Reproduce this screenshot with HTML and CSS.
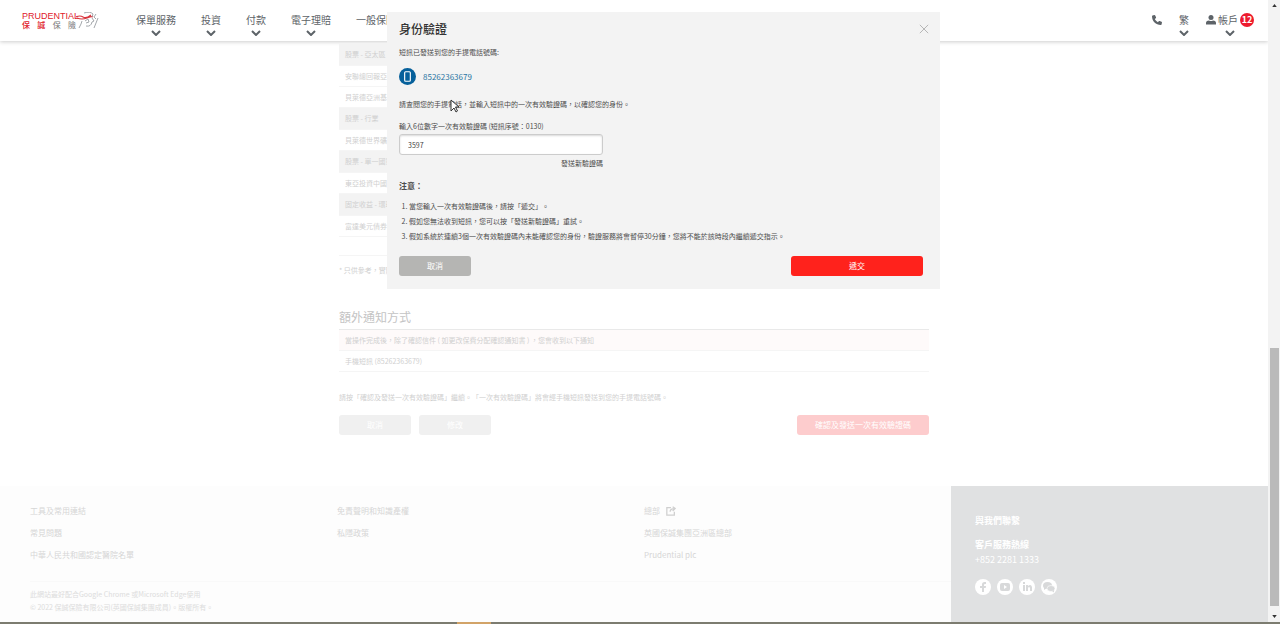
FILE: index.html
```html
<!DOCTYPE html>
<html lang="zh-HK">
<head>
  <meta charset="UTF-8">
  <meta name="viewport" content="width=device-width, initial-scale=1.0">
  <title>保誠保險 - 身份驗證</title>
  <link rel="stylesheet" href="styles.css">
</head>
<body>
  <div class="window">
    <div class="page">
      <header class="site-header">
        <a class="logo" href="#" aria-label="保誠保險">
          <span class="logo-text">
            <span class="logo-en">PRUDENTIAL</span>
            <span class="logo-zh"><b>保</b><b>誠</b><i>保</i><i>險</i></span>
          </span>
          <svg class="logo-face" viewBox="0 0 24 18" fill="none">
            <path d="M0 5q4-2 7 0t8-2M1 6q5 2 10 0t6-1" stroke="#d8343c" stroke-width="1.2"/>
            <path d="M8 1q6-2 9 1l-1 3M6 9l-1 3-2 4M9 9l3-2 1 3-3 1M10 14q5 1 6-4l2-1-2-3M20 2l-2 3 2 2M22 6l-2 5-2 5" stroke="#9a9ea3" stroke-width=".9"/>
          </svg>
        </a>
        <nav class="main-nav">
          <a href="#">保單服務<svg class="chev" viewBox="0 0 10 6"><path d="M1 1l4 4 4-4"/></svg></a>
          <a href="#">投資<svg class="chev" viewBox="0 0 10 6"><path d="M1 1l4 4 4-4"/></svg></a>
          <a href="#">付款<svg class="chev" viewBox="0 0 10 6"><path d="M1 1l4 4 4-4"/></svg></a>
          <a href="#">電子理賠<svg class="chev" viewBox="0 0 10 6"><path d="M1 1l4 4 4-4"/></svg></a>
          <a href="#">一般保險</a>
        </nav>
        <div class="user-nav">
          <a href="#" aria-label="電話"><svg class="phone" viewBox="0 0 512 512"><path d="M165 25c-8-19-28-29-48-23L29 26C12 31 0 46 0 64c0 247 201 448 448 448 18 0 33-12 38-29l24-88c6-20-4-40-23-48l-96-40c-16-7-35-2-46 12l-41 49C234 334 178 278 144 208l49-41c14-11 19-30 12-46z"/></svg></a>
          <a href="#">繁<svg class="chev" viewBox="0 0 10 6"><path d="M1 1l4 4 4-4"/></svg></a>
          <a href="#">
            <span class="account"><svg class="user" viewBox="0 0 20 20"><circle cx="10" cy="5" r="5"/><path d="M0 19v-3q0-5 6-5q4 2 8 0q6 0 6 5v3z"/></svg>帳戶<span class="count">12</span></span>
            <svg class="chev" viewBox="0 0 10 6"><path d="M1 1l4 4 4-4"/></svg>
          </a>
        </div>
      </header>

      <main class="content">
        <table class="funds">
          <tr class="group"><th>股票 - 亞太區</th></tr>
          <tr><td>安聯總回報亞洲</td></tr>
          <tr><td>貝萊德亞洲基金</td></tr>
          <tr class="group"><th>股票 - 行業</th></tr>
          <tr><td>貝萊德世界礦業</td></tr>
          <tr class="group"><th>股票 - 單一國家</th></tr>
          <tr><td>東亞投資中國基金</td></tr>
          <tr class="group"><th>固定收益 - 環球</th></tr>
          <tr><td>富達美元債券基金</td></tr>
        </table>
        <p class="footnote">* 只供參考，實際</p>

        <h2>額外通知方式</h2>
        <table class="notify">
          <tr class="intro"><th>當操作完成後，除了確認信件 ( 如更改保費分配確認通知書 ) ，您會收到以下通知</th></tr>
          <tr><td>手機短訊 (85262363679)</td></tr>
        </table>

        <p class="hint">請按「確認及發送一次有效驗證碼」繼續。「一次有效驗證碼」將會經手機短訊發送到您的手提電話號碼。</p>
        <div class="actions">
          <button class="btn">取消</button>
          <button class="btn">修改</button>
          <button class="btn btn-wide">確認及發送一次有效驗證碼</button>
        </div>
      </main>

      <footer class="site-footer">
        <div class="footer-main">
          <div class="footer-links">
            <div>
              <a href="#">工具及常用連結</a>
              <a href="#">常見問題</a>
              <a href="#">中華人民共和國認定醫院名單</a>
            </div>
            <div>
              <a href="#">免責聲明和知識產權</a>
              <a href="#">私隱政策</a>
            </div>
            <div>
              <a href="#">總部 <svg class="external" viewBox="0 0 12 12"><path d="M6 2H1v9h9V7M5 7q0-4 5-4M8 1l3 2-3 3"/></svg></a>
              <a href="#">英國保誠集團亞洲區總部</a>
              <a href="#">Prudential plc</a>
            </div>
          </div>
          <div class="legal">
            <p>此網站最好配合Google Chrome 或Microsoft Edge使用</p>
            <p>© 2022 保誠保險有限公司(英國保誠集團成員)。版權所有。</p>
          </div>
        </div>
        <div class="contact">
          <h3>與我們聯繫</h3>
          <h3 class="hotline">客戶服務熱線</h3>
          <p>+852 2281 1333</p>
          <div class="social">
            <a href="#" aria-label="Facebook"><svg viewBox="0 0 16 16"><path d="M7 13V9H5V7h2V5.500Q7 3 9.500 3H11v2h-1Q9 5 9 6v1h2l-.3 2H9v4z"/></svg></a>
            <a href="#" aria-label="YouTube"><svg viewBox="0 0 16 16"><rect x="3" y="4" width="10" height="8" rx="2"/><path class="cut" d="M7 6l3 2-3 2z"/></svg></a>
            <a href="#" aria-label="LinkedIn"><svg viewBox="0 0 16 16"><path d="M4 6h2v6H4zM4 3h2v2H4zM7 6h2v1q3-2.500 4 1v4h-2V9q-1-2-2 0v3H7z"/></svg></a>
            <a href="#" aria-label="WeChat"><svg viewBox="0 0 16 16"><ellipse cx="6.500" cy="6.500" rx="4.500" ry="3.500"/><path d="M3 8v3l3-2z"/><ellipse cx="10" cy="9.500" rx="4" ry="3" stroke="#fff" stroke-width=".6"/><path d="M11 12l2 1.500V11z"/></svg></a>
          </div>
        </div>
      </footer>
    </div>

    <div class="scrollbar">
      <svg viewBox="0 0 6 4"><path d="M0 4l3-4 3 4z"/></svg>
      <div class="track"><div class="thumb"></div></div>
      <svg viewBox="0 0 6 4"><path d="M0 0l3 4 3-4z"/></svg>
    </div>
  </div>
  <div class="taskbar"><span></span></div>

  <div class="modal" role="dialog" aria-labelledby="modalTitle">
    <div class="modal-head">
      <h1 id="modalTitle">身份驗證</h1>
      <button class="close" aria-label="關閉"><svg viewBox="0 0 12 12"><path d="M1 1l10 10M11 1L1 11"/></svg></button>
    </div>
    <p>短訊已發送到您的手提電話號碼:</p>
    <div class="mobile">
      <svg viewBox="0 0 18 18"><circle cx="9" cy="9" r="9" fill="#06609b"/><rect x="6" y="4" width="6" height="10" rx="1" fill="none" stroke="#fff" stroke-width="1.200"/></svg>
      <span>85262363679</span>
    </div>
    <p>請查閱您的手提電話，並輸入短訊中的一次有效驗證碼，以確認您的身份。</p>
    <div class="otp">
      <label for="otp">輸入6位數字一次有效驗證碼 (短訊序號：0130)</label>
      <input id="otp" type="text" value="3597" autofocus>
      <a href="#">發送新驗證碼</a>
    </div>
    <h4>注意：</h4>
    <ol>
      <li>當您輸入一次有效驗證碼後，請按「遞交」。</li>
      <li>假如您無法收到短訊，您可以按「發送新驗證碼」重試。</li>
      <li>假如系統於連續3個一次有效驗證碼內未能確認您的身份，驗證服務將會暫停30分鐘，您將不能於該時段內繼續遞交指示。</li>
    </ol>
    <div class="modal-actions">
      <button class="btn cancel">取消</button>
      <button class="btn btn-wide submit">遞交</button>
    </div>
    <svg class="cursor" viewBox="0 0 10 14"><path d="M1 1v11l3-3 2 4 1.500-1-2-4H9z"/></svg>
  </div>
</body>
</html>
```

FILE: styles.css
```css
* {
  box-sizing: border-box;
}
body {
  margin: 0;
  height: 100vh;
  display: flex;
  flex-direction: column;
  overflow: hidden;
  position: relative;
  background: #fff;
  color: #4c4c4c;
  font-family: "Noto Sans CJK TC", sans-serif;
  font-size: 7px;
  line-height: 12px;
  text-spacing-trim: space-all;
}
a {
  color: inherit;
  text-decoration: none;
}
h1, h2, h3, h4, p, ol {
  margin: 0;
}
svg {
  display: block;
}
.window {
  flex: 1;
  min-height: 0;
  display: flex;
}
.page {
  flex: 1;
  display: flex;
  flex-direction: column;
}

/* Header */
.site-header {
  display: flex;
  height: 41px;
  padding: 12px 14px 0 22px;
  box-shadow: 0 1px 4px rgba(0, 0, 0, 0.2);
  color: #5d6368;
  font-size: 10px;
  line-height: 16px;
}
.logo {
  display: flex;
  width: 114px;
}
.logo-en {
  display: block;
  color: #e0202a;
  font: 9px/8px "Liberation Sans", sans-serif;
}
.logo-zh {
  display: flex;
  justify-content: space-between;
  width: 54px;
  font-size: 8px;
  line-height: 9px;
}
.logo-zh b {
  color: #e0202a;
  font-weight: 500;
}
.logo-zh i {
  color: #777;
  font-style: normal;
}
.logo-face {
  width: 24px;
  height: 18px;
  margin-left: -3px;
}
.main-nav {
  display: flex;
  gap: 25px;
  flex: 1;
}
.main-nav > a, .user-nav > a {
  display: flex;
  flex-direction: column;
  align-items: center;
}
.chev {
  width: 10px;
  height: 6px;
  margin-top: 2px;
  fill: none;
  stroke: #5d6368;
  stroke-width: 2;
}
.user-nav {
  display: flex;
  gap: 17px;
}
.phone {
  width: 10px;
  height: 10px;
  margin-top: 3px;
  fill: #5d6368;
}
.account {
  display: flex;
  align-items: center;
  gap: 2px;
}
.user {
  width: 10px;
  height: 10px;
  fill: #5d6368;
}
.count {
  width: 14px;
  height: 14px;
  border-radius: 50%;
  background: #ed1b2e;
  color: #fff;
  font-size: 9px;
  font-weight: 700;
  line-height: 14px;
  text-align: center;
}

/* Page content */
.content {
  width: 590px;
  margin: 2px auto 0;
  flex: 1;
  color: #d0d0d0;
}
table {
  width: 100%;
  border-collapse: collapse;
}
th, td {
  height: 21px;
  padding: 0 6px;
  border-bottom: 1px solid #f5f5f5;
  font-weight: 400;
  text-align: left;
}
.group th {
  height: 22px;
  background: #f3f3f3;
}
.footnote {
  margin-top: 18px;
  padding-top: 8px;
  border-top: 1px solid #f5f5f5;
}
.content h2 {
  margin-top: 32px;
  padding-bottom: 3px;
  border-bottom: 1px solid #e9e9e9;
  color: #c4c4c4;
  font-size: 12px;
  font-weight: 400;
  line-height: 18px;
}
.intro th {
  background: #fefafa;
}
.hint {
  margin: 19px 0 12px;
}
.actions, .modal-actions {
  display: flex;
  gap: 8px;
}
.btn {
  width: 72px;
  height: 20px;
  padding: 0;
  border: 0;
  border-radius: 3px;
  background: #f0f0f0;
  color: #fff;
  font-family: inherit;
  font-size: 8px;
  line-height: 20px;
}
.btn-wide {
  width: 132px;
  margin-left: auto;
  background: #fdcccd;
}

/* Footer */
.site-footer {
  display: grid;
  grid-template-columns: 3fr 1fr;
  height: 136px;
}
.footer-main {
  padding: 18px 0 0 30px;
  background: #fdfdfd;
  color: #d6d6d6;
}
.footer-links {
  display: grid;
  grid-template-columns: repeat(3, 1fr);
  height: 78px;
  border-bottom: 1px solid #f9f9f9;
  font-size: 8px;
}
.footer-links a {
  display: flex;
  align-items: center;
  gap: 6px;
  height: 14px;
  margin-bottom: 8px;
}
.external {
  width: 10px;
  height: 10px;
  fill: none;
  stroke: #cfcfcf;
  stroke-width: 1.5;
}
.legal {
  padding-top: 6px;
  color: #dcdcdc;
}
.legal p {
  line-height: 13px;
}
.contact {
  padding: 28px 24px 0;
  background: #e0e1e2;
  color: #fff;
  font-size: 9px;
}
.contact h3 {
  font-size: 9px;
  line-height: 14px;
}
.contact .hotline {
  margin-top: 10px;
}
.contact p {
  line-height: 16px;
}
.social {
  display: flex;
  gap: 6px;
  margin-top: 11px;
}
.social a {
  width: 16px;
  height: 16px;
  border-radius: 50%;
  background: #fff;
}
.social svg {
  fill: #d8d9da;
}
.social .cut {
  fill: #fff;
}

/* Scrollbar and bottom strip */
.scrollbar {
  width: 12px;
  display: flex;
  flex-direction: column;
  align-items: center;
  padding: 4px 0;
  background: #f3f3f3;
}
.scrollbar svg {
  width: 5px;
  height: 3px;
  fill: #333;
}
.track {
  flex: 1;
  width: 9px;
  display: flex;
  flex-direction: column;
  justify-content: flex-end;
  padding-bottom: 9px;
}
.thumb {
  height: 43%;
  background: #bababa;
}
.taskbar {
  height: 2px;
  background: #7c7c70;
}
.taskbar span {
  display: block;
  width: 34px;
  height: 2px;
  margin-left: 457px;
  background: #d2a368;
}

/* Dialog */
.modal {
  position: absolute;
  top: 12px;
  left: 50%;
  width: 553px;
  margin-left: -253px;
  padding: 8px 17px 13px 12px;
  background: #f3f3f3;
}
.modal-head {
  display: flex;
  justify-content: space-between;
  align-items: center;
  margin-bottom: 8px;
}
.modal h1 {
  color: #333;
  font-size: 12px;
  font-weight: 500;
  line-height: 18px;
}
.close {
  padding: 0;
  border: 0;
  background: none;
  margin-right: -6px;
}
.close svg {
  width: 10px;
  height: 10px;
  fill: none;
  stroke: #aaa;
}
.mobile {
  display: flex;
  align-items: center;
  gap: 7px;
  margin: 10px 0 13px;
  color: #2a75a3;
  font-size: 8px;
}
.mobile svg {
  width: 17px;
  height: 17px;
}
.otp {
  display: flex;
  flex-direction: column;
  width: 204px;
  margin-top: 10px;
}
.otp input {
  height: 21px;
  margin: 2px 0;
  padding: 0 8px;
  border: 1px solid #ccc;
  border-radius: 3px;
  outline: none;
  background: #fff;
  box-shadow: inset 0 1px 2px rgba(0, 0, 0, 0.15);
  color: #444;
  font-family: inherit;
  font-size: 7px;
}
.otp a {
  align-self: flex-end;
}
.modal h4 {
  margin: 10px 0 6px;
  font-size: 8px;
  line-height: 14px;
}
.modal ol {
  padding-left: 10px;
}
.modal li {
  line-height: 15px;
}
.modal-actions {
  margin-top: 12px;
}
.cancel {
  background: #b5b5b3;
}
.submit {
  background: #ff221c;
}
.cursor {
  position: absolute;
  top: 87px;
  left: 63px;
  width: 10px;
  height: 14px;
  fill: #fff;
  stroke: #333;
}
```
